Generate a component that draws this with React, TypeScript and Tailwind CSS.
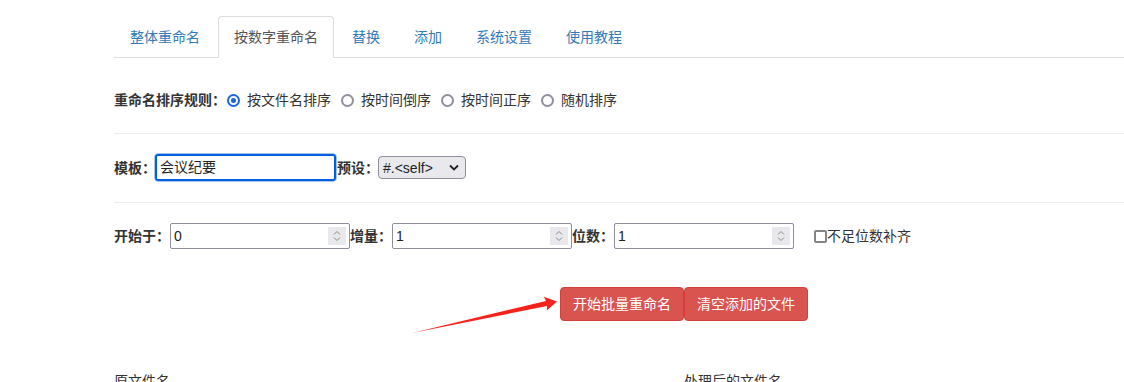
import type { ReactNode } from "react";

const tabs = ["整体重命名", "按数字重命名", "替换", "添加", "系统设置", "使用教程"];
const sortRules = ["按文件名排序", "按时间倒序", "按时间正序", "随机排序"];

function Radio({ checked, label }: { checked?: boolean; label: string }) {
  return (
    <label className={checked ? "ml-[1px] flex items-center" : "ml-[10px] flex items-center"}>
      {checked ? (
        <span className="flex h-[13px] w-[13px] items-center justify-center rounded-full border-2 border-[#1a66dc]">
          <span className="h-[5px] w-[5px] rounded-full bg-[#1a66dc]" />
        </span>
      ) : (
        <span className="h-[13px] w-[13px] rounded-full border-2 border-[#8f8f9d]" />
      )}
      <span className="ml-[7px]">{label}</span>
    </label>
  );
}

function FieldLabel({ children }: { children: ReactNode }) {
  return <span className="font-bold text-[#333]">{children}</span>;
}

function NumberField({ value }: { value: string }) {
  return (
    <div className="relative h-[26px] w-[180px] rounded-[2px] border border-[#8f8f9d] bg-white">
      <span className="absolute top-[2px] left-[3px] leading-[20px] text-[#222]">
        {value}
      </span>
      <svg
        className="absolute top-[3px] right-[3px] bg-[#e9e9ed]"
        width="18"
        height="18"
        viewBox="0 0 18 18"
      >
        <path d="M6 7.5l3-3 3 3" fill="none" stroke="#8a8a8a" strokeWidth="1" />
        <path d="M6 10.5l3 3 3-3" fill="none" stroke="#8a8a8a" strokeWidth="1" />
      </svg>
    </div>
  );
}

function RenameButton({ children }: { children: ReactNode }) {
  return (
    <button className="h-[34px] rounded-[4px] border border-[#d43f3a] bg-[#d9534f] px-[12px] leading-[20px] text-white">
      {children}
    </button>
  );
}

export default function App() {
  return (
    <div
      className="relative h-[382px] w-full overflow-hidden bg-white text-[14px] leading-[20px] text-[#333]"
      style={{ fontFamily: '"Liberation Sans", "Noto Sans CJK SC", sans-serif' }}
    >
      <div className="ml-[114px] w-[1140px]">
        <ul className="mt-[16px] flex border-b border-[#ddd]">
          {tabs.map((tab, i) => (
            <li key={tab} className="-mb-px">
              <a
                className={
                  i === 1
                    ? "mr-[2px] block rounded-t-[4px] border border-[#ddd] border-b-transparent bg-white px-[15px] py-[10px] text-[#555]"
                    : "mr-[2px] block rounded-t-[4px] border border-transparent px-[15px] py-[10px] text-[#337ab7]"
                }
              >
                {tab}
              </a>
            </li>
          ))}
        </ul>

        <div className="flex items-center border-b border-[#eee] pt-[32px] pb-[23px]">
          <FieldLabel>重命名排序规则：</FieldLabel>
          {sortRules.map((rule, i) => (
            <Radio key={rule} label={rule} checked={i === 0} />
          ))}
        </div>

        <div className="flex h-[69px] items-center border-b border-[#eee] pt-[19px] pb-[20px]">
          <FieldLabel>模板：</FieldLabel>
          <div className="h-[29px] w-[183px] -ml-[2px] rounded-[4px] border border-[#a9c5ee] p-0">
            <div className="h-[27px] rounded-[3px] border-2 border-[#0060df] pl-[3px] leading-[23px] text-[#222]">
              会议纪要
            </div>
          </div>
          <FieldLabel>预设：</FieldLabel>
          <div className="ml-[-1px] flex h-[23px] w-[88px] items-center justify-between rounded-[4px] border border-[#8f8f9d] bg-[#e9e9ed] pr-[6px] pl-[4px] text-[#222]">
            <span>#.&lt;self&gt;</span>
            <svg width="10" height="7" viewBox="0 0 10 7">
              <path d="M1 1.5l4 4 4-4" fill="none" stroke="#222" strokeWidth="1.8" />
            </svg>
          </div>
        </div>

        <div className="flex h-[26px] items-center mt-[20px]">
          <FieldLabel>开始于：</FieldLabel>
          <NumberField value="0" />
          <FieldLabel>增量：</FieldLabel>
          <NumberField value="1" />
          <FieldLabel>位数：</FieldLabel>
          <NumberField value="1" />
          <span className="ml-[20px] h-[13px] w-[13px] rounded-[2px] border-2 border-[#858585]" />
          <span>不足位数补齐</span>
        </div>

        <div className="mt-[38px] flex justify-center">
          <RenameButton>开始批量重命名</RenameButton>
          <RenameButton>清空添加的文件</RenameButton>
        </div>

        <div className="mt-[50px] grid grid-cols-2">
          <span>原文件名</span>
          <span>处理后的文件名</span>
        </div>
      </div>

      <svg
        className="pointer-events-none absolute top-0 left-0"
        width="1124"
        height="382"
        viewBox="0 0 1124 382"
      >
        <polygon
          points="412,333 546,301 543.8,296.8 557,301.5 546.8,310.4 547,306"
          fill="#f5221b"
        />
      </svg>
    </div>
  );
}
